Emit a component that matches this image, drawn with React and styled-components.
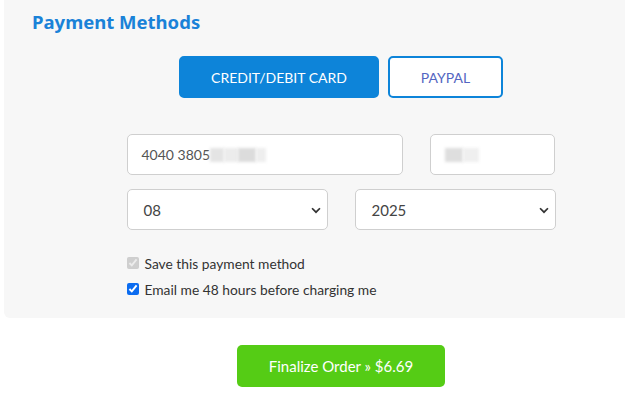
import React from 'react';
import styled, { createGlobalStyle } from 'styled-components';

const GlobalStyle = createGlobalStyle`
    body {
        margin: 0;
        background: #fff;
        overflow: hidden;
        font-family: Lato, "Liberation Sans", sans-serif;
    }
`;

const Page = styled.div`
    width: 625px;
    height: 394px;
    overflow: hidden;
    display: flex;
    flex-direction: column;
`;

const Panel = styled.section`
    margin-left: 4px;
    width: 674px;
    box-sizing: border-box;
    background: #f7f7f7;
    border-radius: 0 0 6px 6px;
    padding: 11px 0 16px 28px;
    display: flex;
    flex-direction: column;
`;

const Title = styled.h2`
    margin: 0;
    font-family: "Noto Sans", sans-serif;
    font-weight: 700;
    font-size: 18.5px;
    line-height: 21px;
    color: #1a82d8;
`;

const Body = styled.div`
    margin-left: -28px;
    display: flex;
    flex-direction: column;
    align-items: center;
`;

const Tabs = styled.div`
    margin-top: 24px;
    display: flex;
    gap: 9px;
`;

const Tab = styled.button`
    height: 42px;
    width: ${props => props.width}px;
    box-sizing: border-box;
    border-radius: 5px;
    border: 2px solid #0d84d9;
    background: ${props => props.active ? '#0d84d9' : '#fff'};
    color: ${props => props.active ? '#fff' : '#5466c2'};
    font-family: Lato, sans-serif;
    font-size: 14px;
    padding: 0;
`;

const Form = styled.div`
    margin-top: 36px;
    width: 429px;
    display: flex;
    flex-direction: column;
    gap: 14px;
`;

const Row = styled.div`
    display: grid;
    grid-template-columns: ${props => props.cols};
    column-gap: 27px;
`;

const Field = styled.div`
    height: 41px;
    box-sizing: border-box;
    border: 1px solid #cfcfcf;
    border-radius: 5px;
    background: #fff;
    display: flex;
    align-items: center;
    padding: 0 14px;
    font-size: 14px;
    color: #555;
`;

const Blur = styled.span`
    display: inline-block;
    width: ${props => props.w}px;
    height: 14px;
    background: ${props => props.shade};
    filter: blur(1.5px);
`;

const SelectBox = styled(Field)`
    justify-content: space-between;
    padding: 0 4px 0 16px;
    color: #444;
    font-size: 15px;
`;

const Checks = styled.div`
    margin-top: 20px;
    width: 429px;
    display: flex;
    flex-direction: column;
`;

const CheckRow = styled.label`
    height: 26px;
    display: flex;
    align-items: center;
    gap: 6px;
    font-size: 13.8px;
    color: #333;
`;

const Box = styled.input`
    margin: 0;
    width: 12px;
    height: 12px;
    accent-color: #0b6cf0;
`;

const Finalize = styled.button`
    margin: 27px 0 0 237px;
    width: 208px;
    height: 42px;
    border: 0;
    border-radius: 5px;
    background: #55cc15;
    color: #fff;
    font-family: Lato, sans-serif;
    font-size: 15px;
    padding: 0;
`;

const Chevron = () => (
    <svg width="14" height="14" viewBox="0 0 16 16">
        <path d="M3.5 6 L8 10.5 L12.5 6" fill="none" stroke="#333" strokeWidth="2" />
    </svg>
);

export default function App() {
    return (
        <Page>
            <GlobalStyle />
            <Panel>
                <Title>Payment Methods</Title>
                <Body>
                    <Tabs>
                        <Tab active width={200}>CREDIT/DEBIT CARD</Tab>
                        <Tab width={115}>PAYPAL</Tab>
                    </Tabs>
                    <Form>
                        <Row cols="276px 125px">
                            <Field>
                                4040 3805
                                <Blur w={14} shade="#e4e4e4" />
                                <Blur w={14} shade="#ececec" />
                                <Blur w={18} shade="#dcdcdc" />
                                <Blur w={10} shade="#eeeeee" />
                            </Field>
                            <Field>
                                <Blur w={18} shade="#dedede" />
                                <Blur w={16} shade="#efefef" />
                            </Field>
                        </Row>
                        <Row cols="201px 201px">
                            <SelectBox>08<Chevron /></SelectBox>
                            <SelectBox>2025<Chevron /></SelectBox>
                        </Row>
                    </Form>
                    <Checks>
                        <CheckRow>
                            <Box type="checkbox" checked disabled readOnly />
                            Save this payment method
                        </CheckRow>
                        <CheckRow>
                            <Box type="checkbox" checked readOnly />
                            Email me 48 hours before charging me
                        </CheckRow>
                    </Checks>
                </Body>
            </Panel>
            <Finalize>Finalize Order » $6.69</Finalize>
        </Page>
    );
}
